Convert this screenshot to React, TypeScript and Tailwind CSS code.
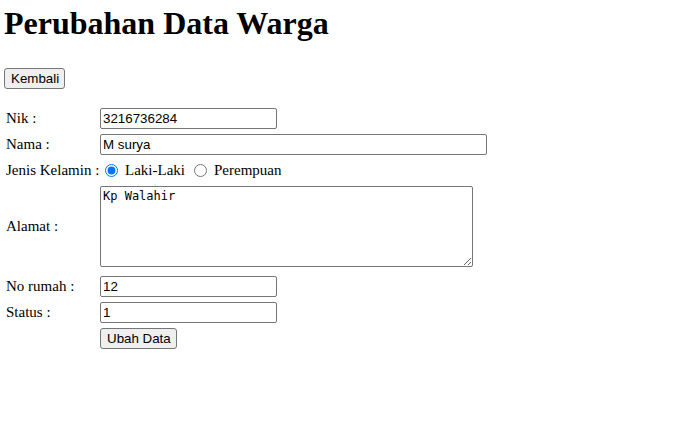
import { useState } from "react";

const field =
  "block h-[21px] rounded-[2px] border border-[#767676] bg-white px-[2px] font-['Liberation_Sans',Arial,sans-serif] text-[13.33px] text-black outline-none";

const btn =
  "block h-[21px] whitespace-nowrap rounded-[3px] border border-[#767676] bg-[#efefef] px-[6px] font-['Liberation_Sans',Arial,sans-serif] text-[13.33px] leading-none text-black";

export default function App() {
  const [gender, setGender] = useState("L");

  return (
    <div className="min-h-screen bg-white px-1 font-['Liberation_Serif','Times_New_Roman',serif] text-[15px] text-black">
      <h1 className="pt-[5px] text-[32px] leading-[37px] font-bold">
        Perubahan Data Warga
      </h1>

      <div className="mt-[26px] flex">
        <button className={`${btn} w-[61px]`}>Kembali</button>
      </div>

      <form
        className="mt-[19px] flex flex-col gap-[5px]"
        onSubmit={(event) => event.preventDefault()}
      >
        <Row label="Nik :">
          <input className={`${field} w-[177px]`} defaultValue="3216736284" />
        </Row>
        <Row label="Nama :">
          <input className={`${field} w-[387px]`} defaultValue="M surya" />
        </Row>
        <Row label="Jenis Kelamin :">
          <div className="flex h-[21px] items-center whitespace-nowrap">
            <label className="flex items-center">
              <input
                type="radio"
                name="jk"
                className="mr-[7px] ml-[5px] h-[13px] w-[13px]"
                checked={gender === "L"}
                onChange={() => setGender("L")}
              />
              Laki-Laki
            </label>
            <label className="ml-[4px] flex items-center">
              <input
                type="radio"
                name="jk"
                className="mr-[7px] ml-[5px] h-[13px] w-[13px]"
                checked={gender === "P"}
                onChange={() => setGender("P")}
              />
              Perempuan
            </label>
          </div>
        </Row>
        <div className="flex items-center pb-[4px]">
          <span className="w-[96px] shrink-0 pl-[2px]">Alamat :</span>
          <textarea
            className="block h-[81px] w-[373px] rounded-[2px] border border-[#767676] bg-white p-[2px] font-['DejaVu_Sans_Mono',monospace] text-[12px] leading-[14px] outline-none"
            defaultValue="Kp Walahir"
          />
        </div>
        <Row label="No rumah :">
          <input className={`${field} w-[177px]`} defaultValue="12" />
        </Row>
        <Row label="Status :">
          <input className={`${field} w-[177px]`} defaultValue="1" />
        </Row>
        <Row label="">
          <button type="submit" className={`${btn} w-[77px]`}>
            Ubah Data
          </button>
        </Row>
      </form>
    </div>
  );
}

function Row({ label, children }: { label: string; children: React.ReactNode }) {
  return (
    <div className="flex h-[21px] items-center">
      <span className="w-[96px] shrink-0 whitespace-nowrap pl-[2px]">{label}</span>
      {children}
    </div>
  );
}
